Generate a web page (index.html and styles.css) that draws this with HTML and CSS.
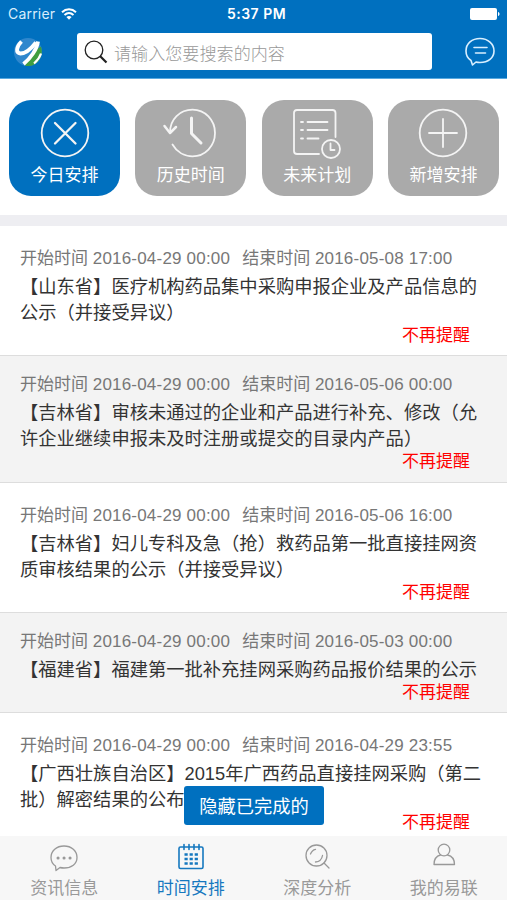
FILE: index.html
```html
<!DOCTYPE html>
<html lang="zh-CN">
<head>
    <meta charset="UTF-8">
    <meta name="viewport" content="width=device-width, initial-scale=1.0">
    <title>时间安排</title>
    <link rel="stylesheet" href="styles.css">
</head>
<body>
    <div class="app">
        <header class="header">
            <div class="status-bar">
                <div class="carrier">
                    <span>Carrier</span>
                    <svg width="16" height="12" viewBox="0 0 16 12" fill="none" stroke="#fff" stroke-width="2">
                        <path d="M1 4.200C5 .4 11 .4 15 4.200M3.500 7C6.200 4.600 9.800 4.600 12.500 7"/>
                        <path d="M5.400 9C7 7.700 9 7.700 10.600 9L8 11.700z" fill="#fff" stroke="none"/>
                    </svg>
                </div>
                <div class="clock">5:37 PM</div>
                <svg class="battery" width="30" height="12" viewBox="0 0 30 12" fill="#fff">
                    <rect width="27" height="12" rx="2"/>
                    <path d="M28 4c2 .5 2 3.500 0 4z"/>
                </svg>
            </div>
            <div class="search-row">
                <svg class="logo" width="32" height="32" viewBox="0 0 32 32">
                    <circle cx="16" cy="16" r="14" fill="#2f87cd"/>
                    <path d="M13 29.700C19 31 24 28.500 27 24.500C30 20 30.500 15 29 10.500C23 14 17 22 13 29.700z" fill="#3f9e3f"/>
                    <path d="M9.500 5.500C4 11 3.500 17 8.500 17.500C13 17.500 18.500 13.500 24 6.500" fill="none" stroke="#fff" stroke-width="3.800"/>
                    <path d="M26 5.500C25 13 19 22 11.500 28" fill="none" stroke="#fff" stroke-width="3.800"/>
                    <path d="M29 17.500C27.500 22 25 25 22 27.500" fill="none" stroke="#fff" stroke-width="2.200"/>
                </svg>
                <div class="search-box">
                    <svg width="24" height="24" viewBox="0 0 24 24" fill="none" stroke="#222">
                        <circle cx="10" cy="10" r="8.800" stroke-width="1.300"/>
                        <path d="M16 16l6.500 6.500" stroke-width="2.200"/>
                    </svg>
                    <span>请输入您要搜索的内容</span>
                </div>
                <svg class="chat" width="32" height="30" viewBox="0 0 32 30" fill="none" stroke="#d9efff" stroke-width="1.600" stroke-linecap="round" stroke-linejoin="round">
                    <path d="M7 23.500C3.500 21.200 2 18 2 14C2 6.500 8 1.500 16 1.500S30 7 30 14S24 25.500 16 25.500C14.500 25.500 13.200 25.400 12 25L8.500 28z"/>
                    <path d="M10 10.500h13M11.500 16h10"/>
                </svg>
            </div>
        </header>

        <nav class="actions">
            <div class="action active">
                <svg width="50" height="50" viewBox="0 0 50 50">
                    <circle cx="25" cy="25" r="23.300"/>
                    <path d="M15 15l20.500 20.500M35.500 15L15 35.500" stroke-width="2.300"/>
                </svg>
                <span>今日安排</span>
            </div>
            <div class="action">
                <svg width="50" height="50" viewBox="0 0 50 50">
                    <path d="M4 24.500C4 11 14 1.700 26.500 1.700C39 1.700 49 12 49 25S39 48.300 26.500 48.300C18 48.300 10.500 43.500 6.500 36.500"/>
                    <path d="M-1.500 18l5.500 7 6-6" stroke-width="2.500"/>
                    <path d="M25.500 10v15.500l9.500 9.500" stroke-width="3"/>
                </svg>
                <span>历史时间</span>
            </div>
            <div class="action">
                <svg width="50" height="50" viewBox="0 0 50 50">
                    <path d="M43.500 29V5Q43.500 2 40.500 2H5Q2 2 2 5V43Q2 46 5 46H27"/>
                    <path d="M15.500 14h20M15.500 22h20M15.500 30.500h11M9 14h2M9 22h2M9 30.500h2"/>
                    <circle cx="39" cy="41" r="9"/>
                    <path d="M38.500 35.500v6.500h4"/>
                </svg>
                <span>未来计划</span>
            </div>
            <div class="action">
                <svg width="50" height="50" viewBox="0 0 50 50">
                    <circle cx="25" cy="25" r="23.300"/>
                    <path d="M25 11v28M11 25h28"/>
                </svg>
                <span>新增安排</span>
            </div>
        </nav>

        <main class="list">
            <article class="item">
                <div class="time"><span>开始时间 <b>2016-04-29 00:00</b></span><span>结束时间 <b>2016-05-08 17:00</b></span></div>
                <div class="title">【山东省】医疗机构药品集中采购申报企业及产品信息的<br>公示（并接受异议）</div>
                <div class="dismiss">不再提醒</div>
            </article>
            <article class="item">
                <div class="time"><span>开始时间 <b>2016-04-29 00:00</b></span><span>结束时间 <b>2016-05-06 00:00</b></span></div>
                <div class="title">【吉林省】审核未通过的企业和产品进行补充、修改（允<br>许企业继续申报未及时注册或提交的目录内产品）</div>
                <div class="dismiss">不再提醒</div>
            </article>
            <article class="item">
                <div class="time"><span>开始时间 <b>2016-04-29 00:00</b></span><span>结束时间 <b>2016-05-06 16:00</b></span></div>
                <div class="title">【吉林省】妇儿专科及急（抢）救药品第一批直接挂网资<br>质审核结果的公示（并接受异议）</div>
                <div class="dismiss">不再提醒</div>
            </article>
            <article class="item">
                <div class="time"><span>开始时间 <b>2016-04-29 00:00</b></span><span>结束时间 <b>2016-05-03 00:00</b></span></div>
                <div class="title">【福建省】福建第一批补充挂网采购药品报价结果的公示</div>
                <div class="dismiss">不再提醒</div>
            </article>
            <article class="item">
                <div class="time"><span>开始时间 <b>2016-04-29 00:00</b></span><span>结束时间 <b>2016-04-29 23:55</b></span></div>
                <div class="title">【广西壮族自治区】2015年广西药品直接挂网采购（第二<br>批）解密结果的公布</div>
                <div class="dismiss">不再提醒</div>
            </article>
            <button class="hide-done">隐藏已完成的</button>
        </main>

        <footer class="tabs">
            <div class="tab">
                <svg width="28" height="28" viewBox="0 0 28 28">
                    <path d="M5.500 23C2.500 21 1 18 1 14.500C1 8 6.500 3 14 3S27 8 27 14.500S21.500 25 14 25Q12 25 10 24.500L6 27.500z"/>
                    <path d="M8 15h.1M14 15h.1M20 15h.1" stroke-width="3"/>
                </svg>
                <span>资讯信息</span>
            </div>
            <div class="tab active">
                <svg width="28" height="28" viewBox="0 0 28 28">
                    <rect x="2" y="4" width="24" height="21.500" rx="1.500" stroke-width="1.600"/>
                    <path d="M7 1.500v5M12 1.500v5M17 1.500v5M22 1.500v5" stroke-width="1.600"/>
                    <path d="M7.500 11.500h13.500M7.500 16h13.500M7.500 20.500h13.500" stroke-width="2.400" stroke-dasharray="3.200 1.900" stroke-linecap="butt"/>
                </svg>
                <span>时间安排</span>
            </div>
            <div class="tab">
                <svg width="28" height="28" viewBox="0 0 28 28">
                    <circle cx="13.500" cy="12.500" r="10.500"/>
                    <path d="M21 20l5 5M12.500 19Q18.500 18.500 19.500 12.500M7.500 11Q9 7 12.500 6.300"/>
                </svg>
                <span>深度分析</span>
            </div>
            <div class="tab">
                <svg width="28" height="28" viewBox="0 0 28 28">
                    <circle cx="14" cy="7" r="5.800"/>
                    <path d="M10.500 12C6.500 13 4 16.500 4 21.500H24.500C24.500 16.500 22 13 17.500 12"/>
                </svg>
                <span>我的易联</span>
            </div>
        </footer>
    </div>
</body>
</html>
```
FILE: styles.css
```css
* {
    box-sizing: border-box;
}

body {
    margin: 0;
    font-family: "Liberation Sans", "Noto Sans CJK SC", sans-serif;
    background: #fff;
}

svg {
    display: block;
    flex-shrink: 0;
    overflow: visible;
}

.app {
    display: flex;
    flex-direction: column;
    height: 900px;
    overflow: hidden;
}

.header {
    height: 79px;
    flex-shrink: 0;
    background: #0070bf;
    border-bottom: 1px solid #58a9e0;
    color: #fff;
}

.status-bar {
    display: grid;
    grid-template-columns: 1fr auto 1fr;
    align-items: center;
    height: 27px;
    padding: 0 7px 0 8px;
    font-family: Inter, sans-serif;
    font-size: 14px;
}

.carrier {
    display: flex;
    align-items: center;
    gap: 6px;
    color: #d8edfc;
    letter-spacing: 0.2px;
}

.clock {
    padding-left: 5px;
    font-weight: 600;
    letter-spacing: 0.5px;
}

.battery {
    justify-self: end;
}

.search-row {
    display: flex;
    align-items: center;
    padding: 6px 11px 0 12px;
}

.search-box {
    display: flex;
    align-items: center;
    gap: 6px;
    width: 355px;
    height: 37px;
    margin: 0 32px 0 33px;
    padding-left: 7px;
    background: #fff;
    border-radius: 3px;
    color: #999;
    font-size: 17.1px;
    font-weight: 300;
}

.search-box span {
    padding-top: 2px;
}

.actions {
    display: flex;
    justify-content: space-between;
    flex-shrink: 0;
    height: 147px;
    padding: 21px 8px 0 9px;
    border-bottom: 11px solid #eeeef2;
}

.action {
    display: flex;
    flex-direction: column;
    align-items: center;
    width: 111px;
    height: 96px;
    padding-top: 8px;
    border-radius: 22px;
    background: #aaa;
    color: #fff;
    font-size: 17px;
    line-height: 35px;
}

.action.active {
    background: #0070bf;
}

.action svg {
    fill: none;
    stroke: #f4f4f4;
    stroke-width: 1.8;
    stroke-linecap: round;
    stroke-linejoin: round;
}

.list {
    position: relative;
    flex: 1;
    min-height: 0;
    overflow: hidden;
}

.item {
    padding: 21px 20px 7.25px;
    border-bottom: 1px solid #ddd;
}

.item:nth-child(even) {
    padding-top: 17px;
    background: #f3f3f3;
}

.time {
    display: flex;
    gap: 12px;
    height: 27px;
    line-height: 24px;
    color: #777;
    font-size: 17px;
    white-space: nowrap;
}

.time b {
    font-weight: normal;
    letter-spacing: 0.2px;
}

.title {
    color: #333;
    font-size: 18.3px;
    line-height: 26px;
    white-space: nowrap;
}

.dismiss {
    height: 22px;
    padding-right: 17px;
    color: #f00;
    font-size: 17px;
    line-height: 20px;
    text-align: right;
}

.hide-done {
    position: absolute;
    left: 184px;
    bottom: 11px;
    width: 140px;
    height: 39px;
    padding: 0 0 2px;
    border: none;
    border-radius: 3px;
    background: #0070bf;
    color: #fff;
    font-family: inherit;
    font-size: 18.3px;
}

.tabs {
    display: grid;
    grid-template-columns: repeat(4, 1fr);
    flex-shrink: 0;
    height: 64px;
    padding-left: 1px;
    background: #f7f7f7;
}

.tab {
    display: flex;
    flex-direction: column;
    align-items: center;
    padding-top: 7px;
    color: #999;
    font-size: 17px;
    line-height: 35px;
}

.tab svg {
    fill: none;
    stroke: currentColor;
    stroke-width: 1.3;
    stroke-linecap: round;
    stroke-linejoin: round;
}

.tab.active {
    color: #1678bf;
}
```
